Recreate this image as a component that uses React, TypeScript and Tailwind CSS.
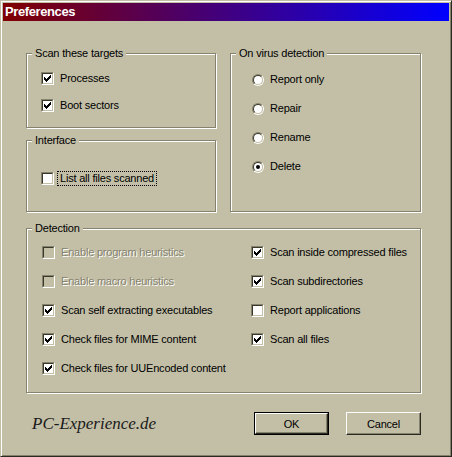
import type { ReactNode } from 'react';

function CheckMark() {
  return (
    <svg width="7" height="7" viewBox="0 0 7 7" shapeRendering="crispEdges">
      <path d="M0 2h1v3H0zM1 3h1v3H1zM2 4h1v3H2zM3 3h1v3H3zM4 2h1v3H4zM5 1h1v3H5zM6 0h1v3H6z" fill="#000" />
    </svg>
  );
}

function Box({ checked, disabled }: { checked?: boolean; disabled?: boolean }) {
  return (
    <span className="flex h-[13px] w-[13px] shrink-0 border border-t-[#85826e] border-l-[#85826e] border-b-white border-r-white">
      <span
        className={`flex flex-1 items-center justify-center border border-t-[#3a3829] border-l-[#3a3829] border-b-[#c3bfa7] border-r-[#c3bfa7] ${
          disabled ? 'bg-[#c3bfa7]' : 'bg-white'
        }`}
      >
        {checked && <CheckMark />}
      </span>
    </span>
  );
}

function Radio({ checked }: { checked?: boolean }) {
  return (
    <span className="flex h-[12px] w-[12px] shrink-0 rounded-full border border-t-[#85826e] border-l-[#85826e] border-b-white border-r-white">
      <span className="flex flex-1 items-center justify-center rounded-full border border-t-[#3a3829] border-l-[#3a3829] border-b-[#c3bfa7] border-r-[#c3bfa7] bg-white">
        {checked && <span className="h-[4px] w-[4px] rounded-full bg-black" />}
      </span>
    </span>
  );
}

function CheckRow({ label, checked, disabled, focused }: { label: string; checked?: boolean; disabled?: boolean; focused?: boolean }) {
  return (
    <div className="flex h-[13px] items-center">
      <Box checked={checked} disabled={disabled} />
      {focused ? (
        <span className="ml-[4px] px-[2px] leading-[13px] outline outline-1 outline-dotted outline-black">{label}</span>
      ) : (
        <span className={`ml-[6px] whitespace-nowrap leading-[13px] ${disabled ? 'text-[#85826e] [text-shadow:1px_1px_0_#fff]' : ''}`}>{label}</span>
      )}
    </div>
  );
}

function RadioRow({ label, checked }: { label: string; checked?: boolean }) {
  return (
    <div className="flex h-[13px] items-center">
      <Radio checked={checked} />
      <span className="ml-[6px] leading-[13px]">{label}</span>
    </div>
  );
}

function Group({ title, className, children }: { title: string; className?: string; children: ReactNode }) {
  return (
    <fieldset className={`min-w-0 border border-[#85826e] p-0 shadow-[inset_1px_1px_0_#fff,1px_1px_0_#fff] ${className ?? ''}`}>
      <legend className="ml-[5px] bg-[#c3bfa7] px-[3px] leading-[13px]">{title}</legend>
      {children}
    </fieldset>
  );
}

function Button({ label, isDefault }: { label: string; isDefault?: boolean }) {
  const inner = (
    <span className="flex h-full w-full items-center justify-center border border-t-white border-l-white border-b-[#2b2a20] border-r-[#2b2a20] shadow-[inset_-1px_-1px_0_#85826e]">
      {label}
    </span>
  );
  return isDefault ? (
    <button type="button" className="h-[23px] w-[75px] border border-black bg-[#c3bfa7]">
      {inner}
    </button>
  ) : (
    <button type="button" className="h-[23px] w-[75px] bg-[#c3bfa7]">
      {inner}
    </button>
  );
}

export default function App() {
  return (
    <div className="flex h-[457px] w-[452px] flex-col border border-t-[#c3bfa7] border-l-[#c3bfa7] border-b-[#2b2a20] border-r-[#2b2a20] bg-[#c3bfa7] p-[2px] font-['Liberation_Sans',Arial,sans-serif] text-[11px] tracking-[-0.2px] text-black shadow-[inset_1px_1px_0_#fff,inset_-1px_-1px_0_#85826e]">
      {/* Title bar */}
      <div className="flex h-[18px] shrink-0 items-center bg-[linear-gradient(to_right,#800000,#0000ff)] px-[2px] text-[13px] font-bold tracking-[-0.4px] text-white">
        Preferences
      </div>

      <div className="flex flex-col pl-[23px] pt-[26px]">
        <div className="flex gap-[14px]">
          <div className="flex w-[190px] flex-col gap-[6px]">
            <Group title="Scan these targets" className="h-[81px]">
              <div className="flex flex-col gap-[14px] pl-[14px] pt-[12px]">
                <CheckRow label="Processes" checked />
                <CheckRow label="Boot sectors" checked />
              </div>
            </Group>
            <Group title="Interface" className="h-[78px]">
              <div className="pl-[14px] pt-[25px]">
                <CheckRow label="List all files scanned" focused />
              </div>
            </Group>
          </div>
          <Group title="On virus detection" className="w-[191px]">
            <div className="flex flex-col gap-[16px] pl-[21px] pt-[13px]">
              <RadioRow label="Report only" />
              <RadioRow label="Repair" />
              <RadioRow label="Rename" />
              <RadioRow label="Delete" checked />
            </div>
          </Group>
        </div>

        <Group title="Detection" className="mt-[10px] h-[171px] w-[395px]">
          <div className="grid grid-cols-[209px_1fr] gap-y-[16px] pl-[15px] pt-[11px]">
            <CheckRow label="Enable program heuristics" disabled />
            <CheckRow label="Scan inside compressed files" checked />
            <CheckRow label="Enable macro heuristics" disabled />
            <CheckRow label="Scan subdirectories" checked />
            <CheckRow label="Scan self extracting executables" checked />
            <CheckRow label="Report applications" />
            <CheckRow label="Check files for MIME content" checked />
            <CheckRow label="Scan all files" checked />
            <CheckRow label="Check files for UUEncoded content" checked />
          </div>
        </Group>

        <div className="mt-[18px] flex w-[395px] items-center">
          <span className="ml-[6px] font-['Liberation_Serif',serif] text-[17px] italic tracking-normal text-[#1a1a1a]">
            PC-Experience.de
          </span>
          <div className="ml-auto flex gap-[17px]">
            <Button label="OK" isDefault />
            <Button label="Cancel" />
          </div>
        </div>
      </div>
    </div>
  );
}
